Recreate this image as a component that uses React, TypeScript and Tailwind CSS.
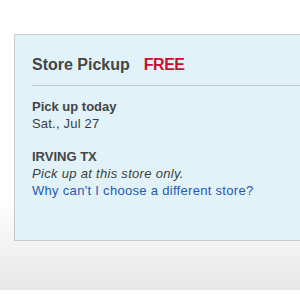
export default function App() {
  return (
    <div className="w-[300px] h-[300px] bg-white overflow-hidden" style={{ fontFamily: '"Liberation Sans", Arial, Helvetica, sans-serif' }}>
      <div className="h-[290px] pt-[34px] pl-[14px] bg-[linear-gradient(to_bottom,#ffffff_0%,#ffffff_68%,#e7e7e7_100%)]">
        <div className="h-[207px] border-l border-t border-b border-[#c9c9c9] bg-[#e1f3f8] pl-[17px] pt-[20px]">
          <div className="flex items-baseline text-[16px] leading-[20px] font-bold">
            <span className="text-[#454545]">Store Pickup</span>
            <span className="ml-[14px] text-[#c8102e] tracking-[-0.5px]">FREE</span>
          </div>
          <div className="mt-[10px] h-px bg-[#c8c8c8]" />
          <div className="mt-[12px] text-[13px] leading-[17px] text-[#3d3d3d]">
            <div className="font-bold text-[#444]">Pick up today</div>
            <div className="tracking-[0.2px]">Sat., Jul 27</div>
          </div>
          <div className="mt-[16px] text-[13px] leading-[17px] text-[#3d3d3d]">
            <div className="font-bold text-[#444]">IRVING TX</div>
            <div className="italic tracking-[0.3px]">Pick up at this store only.</div>
            <div className="text-[#2458b3] tracking-[0.3px]">Why can't I choose a different store?</div>
          </div>
        </div>
      </div>
    </div>
  );
}
